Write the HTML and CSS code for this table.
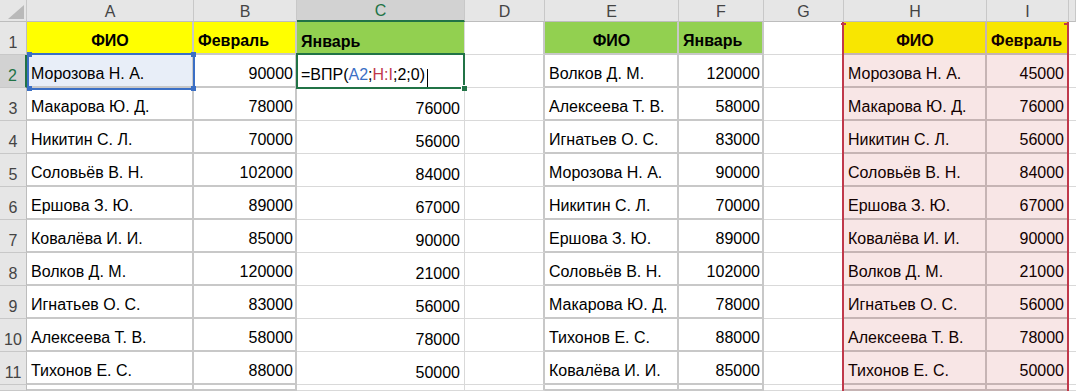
FILE: index.html
```html
<!DOCTYPE html>
<html lang="ru">
<head>
<meta charset="utf-8">
<title>ВПР</title>
<link rel="stylesheet" href="styles.css">
</head>
<body>
<div class="sheet">
  <div class="c corner"><svg width="26" height="21" viewBox="0 0 26 21"><polygon points="8,19 24,19 24,5" fill="#b9b9b9"/></svg></div>
  <div class="c ch">A</div>
  <div class="c ch">B</div>
  <div class="c ch sel">C</div>
  <div class="c ch">D</div>
  <div class="c ch">E</div>
  <div class="c ch">F</div>
  <div class="c ch">G</div>
  <div class="c ch">H</div>
  <div class="c ch">I</div>
  <div class="c ch"></div>

  <div class="c rh">1</div>
  <div class="c t y b m">ФИО</div>
  <div class="c t y b">Февраль</div>
  <div class="c g b pt">Январь</div>
  <div class="c dl"></div>
  <div class="c t g b m">ФИО</div>
  <div class="c t g b">Январь</div>
  <div class="c"></div>
  <div class="c t y b m">ФИО</div>
  <div class="c t y b">Февраль</div>
  <div class="c"></div>

  <div class="c rh sel">2</div>
  <div class="c t ref">Морозова Н. А.</div>
  <div class="c t n">90000</div>
  <div class="c pt edit">=ВПР(<span class="fa">A2</span>;<span class="fh">H:I</span>;2;0)<span class="caret"></span></div>
  <div class="c dl"></div>
  <div class="c t">Волков Д. М.</div>
  <div class="c t n">120000</div>
  <div class="c"></div>
  <div class="c t">Морозова Н. А.</div>
  <div class="c t n ni">45000</div>
  <div class="c"></div>

  <div class="c rh">3</div>
  <div class="c t">Макарова Ю. Д.</div>
  <div class="c t n">78000</div>
  <div class="c v">76000</div>
  <div class="c dl"></div>
  <div class="c t">Алексеева Т. В.</div>
  <div class="c t n">58000</div>
  <div class="c"></div>
  <div class="c t">Макарова Ю. Д.</div>
  <div class="c t n ni">76000</div>
  <div class="c"></div>

  <div class="c rh">4</div>
  <div class="c t">Никитин С. Л.</div>
  <div class="c t n">70000</div>
  <div class="c v">56000</div>
  <div class="c dl"></div>
  <div class="c t">Игнатьев О. С.</div>
  <div class="c t n">83000</div>
  <div class="c"></div>
  <div class="c t">Никитин С. Л.</div>
  <div class="c t n ni">56000</div>
  <div class="c"></div>

  <div class="c rh">5</div>
  <div class="c t">Соловьёв В. Н.</div>
  <div class="c t n">102000</div>
  <div class="c v">84000</div>
  <div class="c dl"></div>
  <div class="c t">Морозова Н. А.</div>
  <div class="c t n">90000</div>
  <div class="c"></div>
  <div class="c t">Соловьёв В. Н.</div>
  <div class="c t n ni">84000</div>
  <div class="c"></div>

  <div class="c rh">6</div>
  <div class="c t">Ершова З. Ю.</div>
  <div class="c t n">89000</div>
  <div class="c v">67000</div>
  <div class="c dl"></div>
  <div class="c t">Никитин С. Л.</div>
  <div class="c t n">70000</div>
  <div class="c"></div>
  <div class="c t">Ершова З. Ю.</div>
  <div class="c t n ni">67000</div>
  <div class="c"></div>

  <div class="c rh">7</div>
  <div class="c t">Ковалёва И. И.</div>
  <div class="c t n">85000</div>
  <div class="c v">90000</div>
  <div class="c dl"></div>
  <div class="c t">Ершова З. Ю.</div>
  <div class="c t n">89000</div>
  <div class="c"></div>
  <div class="c t">Ковалёва И. И.</div>
  <div class="c t n ni">90000</div>
  <div class="c"></div>

  <div class="c rh">8</div>
  <div class="c t">Волков Д. М.</div>
  <div class="c t n">120000</div>
  <div class="c v">21000</div>
  <div class="c dl"></div>
  <div class="c t">Соловьёв В. Н.</div>
  <div class="c t n">102000</div>
  <div class="c"></div>
  <div class="c t">Волков Д. М.</div>
  <div class="c t n ni">21000</div>
  <div class="c"></div>

  <div class="c rh">9</div>
  <div class="c t">Игнатьев О. С.</div>
  <div class="c t n">83000</div>
  <div class="c v">56000</div>
  <div class="c dl"></div>
  <div class="c t">Макарова Ю. Д.</div>
  <div class="c t n">78000</div>
  <div class="c"></div>
  <div class="c t">Игнатьев О. С.</div>
  <div class="c t n ni">56000</div>
  <div class="c"></div>

  <div class="c rh">10</div>
  <div class="c t">Алексеева Т. В.</div>
  <div class="c t n">58000</div>
  <div class="c v">78000</div>
  <div class="c dl"></div>
  <div class="c t">Тихонов Е. С.</div>
  <div class="c t n">88000</div>
  <div class="c"></div>
  <div class="c t">Алексеева Т. В.</div>
  <div class="c t n ni">78000</div>
  <div class="c"></div>

  <div class="c rh">11</div>
  <div class="c t">Тихонов Е. С.</div>
  <div class="c t n">88000</div>
  <div class="c v">50000</div>
  <div class="c dl"></div>
  <div class="c t">Ковалёва И. И.</div>
  <div class="c t n">85000</div>
  <div class="c"></div>
  <div class="c t">Тихонов Е. С.</div>
  <div class="c t n ni">50000</div>
  <div class="c"></div>

  <div class="c rh"></div>
  <div class="c t"></div>
  <div class="c t"></div>
  <div class="c"></div>
  <div class="c dl"></div>
  <div class="c t"></div>
  <div class="c t"></div>
  <div class="c"></div>
  <div class="c t"></div>
  <div class="c t"></div>
  <div class="c"></div>

  <div class="ov sel-ref">
    <span class="hd hd-tl"></span><span class="hd hd-tr"></span>
    <span class="hd hd-bl"></span><span class="hd hd-br"></span>
  </div>
  <div class="ov sel-edit"><span class="fill"></span></div>
  <div class="ov sel-range"><span class="rh-l"></span><span class="rh-r"></span></div>
</div>
</body>
</html>
```
FILE: styles.css
```css
* { box-sizing: border-box; }
body { margin: 0; background: #fff; font-family: "Liberation Sans", Arial, sans-serif; }

.sheet {
  display: grid;
  grid-template-columns: 27px 167px 103px 168px 80px 134px 85px 80px 143px 82px 7px;
  grid-template-rows: 22px repeat(11, 33px) 6px;
  position: relative;
  width: 1076px;
  height: 391px;
  overflow: hidden;
  font-size: 16px;
  line-height: 18px;
  color: #000;
}

.c {
  display: flex;
  align-items: flex-end;
  white-space: nowrap;
  overflow: hidden;
  border-right: 1px solid #d9d9d9;
  border-bottom: 1px solid #d9d9d9;
  padding: 0 3px 2px 4px;
}
.t { border-right: 2px solid #c8c8c8; border-bottom: 2px solid #c8c8c8; padding-bottom: 3px; }
.dl { border-right: 2px solid #c8c8c8; }
.pt { padding-bottom: 3px; }
.n { justify-content: flex-end; padding-right: 2px; }
.ni { padding-right: 3px; }
.v { justify-content: flex-end; padding-right: 4px; }
.m { justify-content: center; }
.b { font-weight: bold; }
.y { background: #ffff00; }
.g { background: #92d050; }
.ref { background: #e8eef8; }

.corner { background: #e6e6e6; padding: 0; border-right: 1px solid #c8c8c8; border-bottom: 1px solid #bdbdbd; }
.ch {
  background: #e6e6e6;
  color: #444;
  justify-content: center;
  padding: 0;
  border-right: 1px solid #c8c8c8;
  border-bottom: 1px solid #bdbdbd;
}
.rh {
  background: #e6e6e6;
  color: #444;
  justify-content: center;
  padding: 0 0 2px;
  border-right: 1px solid #bdbdbd;
  border-bottom: 1px solid #c8c8c8;
}
.ch.sel { background: #d2d2d2; color: #217346; border-bottom: 2px solid #217346; }
.rh.sel { background: #d2d2d2; color: #217346; border-right: 2px solid #217346; }

.fa { color: #3b6fc5; }
.fh { color: #c0394b; }
.caret {
  display: inline-block;
  width: 1px;
  height: 25px;
  background: #000;
  margin: -10px 0 -10px 2px;
  vertical-align: 3px;
}

.ov { position: absolute; pointer-events: none; }

.sel-ref {
  grid-column: 2 / 3;
  grid-row: 3 / 4;
  top: -2px; right: -1px; bottom: -2px; left: 0;
  border: 2px solid #3b6fc5;
}
.hd { position: absolute; width: 5px; height: 5px; background: #3b6fc5; }
.hd-tl { top: -3px; left: -2px; }
.hd-tr { top: -3px; right: -3px; }
.hd-bl { bottom: -3px; left: -2px; }
.hd-br { bottom: -3px; right: -3px; }

.sel-edit {
  grid-column: 4 / 5;
  grid-row: 3 / 4;
  top: -2px; right: 0; bottom: -1px; left: -1px;
  border: 2px solid #217346;
}
.fill {
  position: absolute;
  right: -4px;
  bottom: -4px;
  width: 6px;
  height: 6px;
  background: #217346;
  border-left: 1px solid #fff;
  border-top: 1px solid #fff;
}

.sel-range {
  grid-column: 9 / 11;
  grid-row: 2 / 14;
  top: 0; right: 0; bottom: 0; left: -2px;
  border-left: 2px solid #c0394b;
  border-right: 2px solid #c0394b;
  background: rgba(185, 5, 5, 0.1);
}
.rh-l, .rh-r { position: absolute; top: 1px; width: 5px; height: 2px; background: #c0394b; }
.rh-l { left: -3px; }
.rh-r { right: -2px; }
```
